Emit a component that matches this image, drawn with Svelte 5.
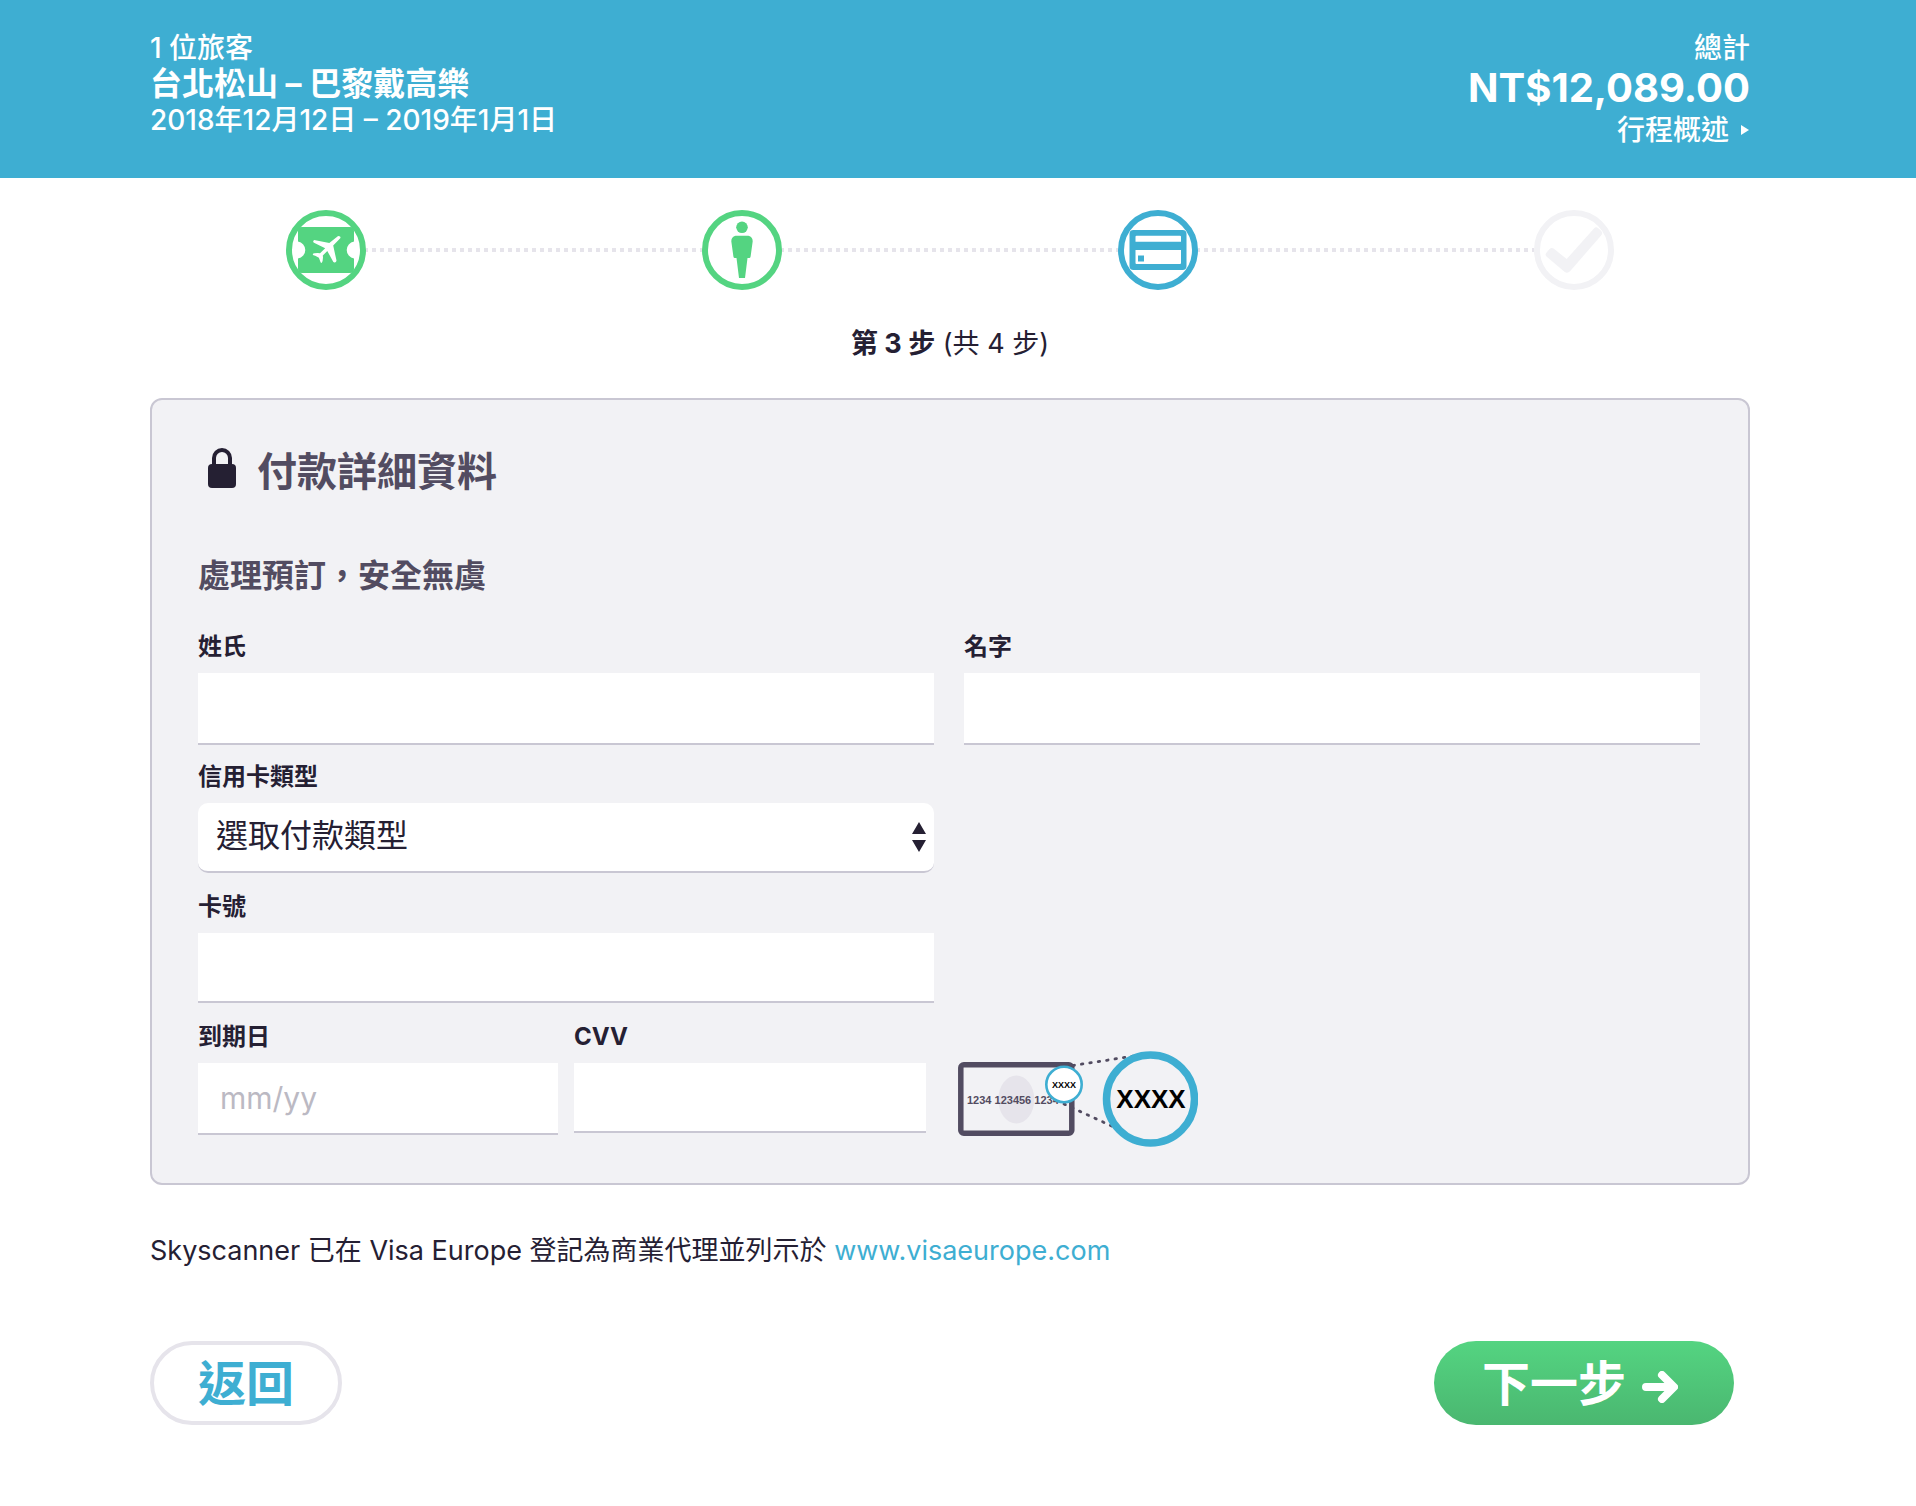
<script>
    // trip summary shown in the top bar
    const trip = {
        travellers: '1 位旅客',
        route: '台北松山 – 巴黎戴高樂',
        dates: '2018年12月12日 – 2019年1月1日',
        total: 'NT$12,089.00'
    }

    // checkout steps, in order
    const steps = [
        { icon: 'ticket', label: '航班', state: 'done' },
        { icon: 'person', label: '旅客', state: 'done' },
        { icon: 'card', label: '付款', state: 'current' },
        { icon: 'check', label: '完成', state: 'todo' }
    ]

    const cardTypes = ['Visa', 'Mastercard', 'American Express']

    let lastName = $state('')
    let firstName = $state('')
    let cardType = $state('')
    let cardNumber = $state('')
    let expiry = $state('')
    let cvv = $state('')

    function submit(event) {
        event.preventDefault()
    }
</script>

<div class="page" lang="zh-Hant">
    <header>
        <div class="trip">
            <p>{trip.travellers}</p>
            <p class="route">{trip.route}</p>
            <p>{trip.dates}</p>
        </div>
        <div class="total">
            <p>總計</p>
            <p class="price">{trip.total}</p>
            <a href="#summary">
                行程概述
                <svg width="9" height="12" viewBox="0 0 9 12" aria-hidden="true"><path d="M0 1v10l8-5z" /></svg>
            </a>
        </div>
    </header>

    <main>
        <ol class="steps">
            {#each steps as step, i}
                {#if i > 0}
                    <li class="line" aria-hidden="true"></li>
                {/if}
                <li class="step {step.state}">
                    <svg viewBox="0 0 80 80" role="img" aria-label={step.label}>
                        <circle class="ring" cx="40" cy="40" r="37" />
                        {#if step.icon === 'ticket'}
                            <path d="M16 17H64a4 4 0 0 1 4 4V31.500a8.600 8.600 0 0 0 0 17V59a4 4 0 0 1-4 4H16a4 4 0 0 1-4-4V48.500a8.600 8.600 0 0 0 0-17V21a4 4 0 0 1 4-4z" />
                            <path class="plane" d="M43.300 32.900L51.800 26.300Q53 25.600 54 26.600T54 28.600L47.200 35.500L50.500 50.600Q50.400 52 49 52.500Q47.800 52.700 47.200 51.700L41.300 41L36.800 45.400L37 47.600L36.600 51Q36 52.800 35.200 53Q34.400 52.600 34.200 51.300L32.900 47.700L29.200 45.700Q27 45.400 26.700 44.400Q27 43.300 28.500 43.300L31.700 42.900L34 43.200L39.200 38.200L28 32.700Q26.900 32 27.300 31Q28 29.800 29.300 30.200Z" />
                        {:else if step.icon === 'person'}
                            <circle cx="40" cy="17.300" r="5.800" />
                            <path d="M33.500 25.700h13q4.200 1 4.200 5.500L48.600 46.500q-.2 1.500-1.500 1.500h-1.600L43 68h-6L34.500 48h-1.600q-1.300 0-1.500-1.500L29.300 31.200q0-4.500 4.200-5.500z" />
                        {:else if step.icon === 'card'}
                            <path fill-rule="evenodd" d="M15.500 20h49a4 4 0 0 1 4 4v32a4 4 0 0 1-4 4h-49a4 4 0 0 1-4-4V24a4 4 0 0 1 4-4zM18.500 25.700a1 1 0 0 0-1 1v5h45.500v-5a1 1 0 0 0-1-1zM17.500 40v13a1 1 0 0 0 1 1h43.500a1 1 0 0 0 1-1v-13z" />
                            <path d="M20 45.500h6v6h-6z" />
                        {:else}
                            <path d="M60 18.500Q62 16.300 64.300 18.300L67 20.800Q69.200 23 67.300 25.200L36 61.300Q33.300 64 30.500 61.800L12.500 46.500Q10.700 44.600 12.400 42.700L15.300 39.300Q17.500 37 19.600 38.600L32.700 49Z" />
                        {/if}
                    </svg>
                </li>
            {/each}
        </ol>
        <p class="progress"><strong>第 3 步</strong> (共 4 步)</p>

        <form id="payment" onsubmit={submit}>
            <h1>
                <svg width="29" height="40" viewBox="0 0 29 40" aria-hidden="true">
                    <path class="shackle" d="M6 18V10a8 8 0 0 1 16 0V18" />
                    <rect y="16" width="28" height="24" rx="4" />
                </svg>
                付款詳細資料
            </h1>
            <h2>處理預訂，安全無虞</h2>

            <div class="row">
                <div class="field">
                    <label for="last-name">姓氏</label>
                    <input id="last-name" class="tall" type="text" bind:value={lastName} />
                </div>
                <div class="field">
                    <label for="first-name">名字</label>
                    <input id="first-name" class="tall" type="text" bind:value={firstName} />
                </div>
            </div>

            <div class="row">
                <div class="field">
                    <label for="card-type">信用卡類型</label>
                    <div class="select">
                        <select id="card-type" bind:value={cardType}>
                            <option value="">選取付款類型</option>
                            {#each cardTypes as type}
                                <option value={type}>{type}</option>
                            {/each}
                        </select>
                        <svg width="14" height="30" viewBox="0 0 14 30" aria-hidden="true">
                            <path d="M7 0l7 12H0zM7 30l7-12H0z" />
                        </svg>
                    </div>
                </div>
            </div>

            <div class="row">
                <div class="field">
                    <label for="card-number">卡號</label>
                    <input id="card-number" type="text" inputmode="numeric" bind:value={cardNumber} />
                </div>
            </div>

            <div class="row security">
                <div class="field">
                    <label for="expiry">到期日</label>
                    <input id="expiry" class="tall" type="text" placeholder="mm/yy" bind:value={expiry} />
                </div>
                <div class="field">
                    <label for="cvv">CVV</label>
                    <input id="cvv" type="text" inputmode="numeric" bind:value={cvv} />
                </div>
                <!-- where to find the code on the card -->
                <svg class="hint" width="240" height="96" viewBox="0 0 240 96">
                    <rect class="card" x="2.800" y="13.800" width="111" height="68.500" rx="3" />
                    <ellipse cx="58.300" cy="48.500" rx="18" ry="24" />
                    <text class="digits" x="9" y="53">1234 123456 1234</text>
                    <path class="dots" d="M115 14.500L176 5M106 53L158 77" />
                    <circle class="small" cx="106" cy="33.500" r="17.700" />
                    <text class="small-code" x="106" y="37">XXXX</text>
                    <circle class="big" cx="192.500" cy="48" r="44" />
                    <text class="big-code" x="193" y="57">XXXX</text>
                </svg>
            </div>
        </form>

        <p class="note">Skyscanner 已在 Visa Europe 登記為商業代理並列示於 <a href="http://www.visaeurope.com">www.visaeurope.com</a></p>

        <div class="actions">
            <button class="back" type="button">返回</button>
            <button class="next" type="submit" form="payment">
                下一步
                <svg width="36" height="32" viewBox="0 0 36 32" aria-hidden="true">
                    <path d="M4 16H30M20 4L32 16L20 28" />
                </svg>
            </button>
        </div>
    </main>
</div>

<style>
:global(body) {
    margin: 0;
    background-color: #fff;
}

.page {
    font-family: Inter, "Noto Sans CJK TC", sans-serif;
    font-size: 28px;
    line-height: 36px;
    color: #252033;
}

p, h1, h2 {
    margin: 0;
}

/* top bar */
header {
    display: flex;
    justify-content: space-between;
    padding: 30px 166px 28px 150px;
    background-color: #3eaed2;
    color: #fff;
    font-weight: 500;
}

header .route {
    font-size: 32px;
    font-weight: 700;
}

.total {
    text-align: right;
}

.total .price {
    font-size: 40px;
    font-weight: 700;
    line-height: 44px;
}

.total a {
    display: flex;
    justify-content: flex-end;
    align-items: center;
    gap: 12px;
    line-height: 40px;
    color: #fff;
    text-decoration: none;
}

.total svg {
    fill: #fff;
}

main {
    padding: 32px 166px 72px 150px;
}

/* step indicator */
.steps {
    display: flex;
    align-items: center;
    margin: 0;
    padding: 0 136px;
    list-style: none;
}

.step {
    width: 80px;
    height: 80px;
}

.step svg {
    display: block;
    fill: currentColor;
}

.step .ring {
    fill: none;
    stroke: currentColor;
    stroke-width: 6;
}

.step .plane {
    fill: #fff;
}

.done {
    color: #54d481;
}

.current {
    color: #3eaed2;
}

.todo {
    color: #f2f2f5;
}

.line {
    flex: 1;
    height: 4px;
    background: repeating-linear-gradient(to right, #e6e4eb 0 2px, transparent 2px 6px, #e6e4eb 6px 8px);
}

.progress, .note {
    font-size: 27px;
}

.progress {
    margin: 36px 0;
    text-align: center;
}

/* payment form */
form {
    padding: 48px 48px 32px 46px;
    border: 2px solid #c9c7d3;
    border-radius: 12px;
    background-color: #f2f2f5;
}

h1 {
    display: flex;
    gap: 20px;
    padding-left: 10px;
    font-size: 40px;
    line-height: 48px;
    color: #524c61;
}

h1 svg {
    fill: #252033;
}

h1 .shackle {
    fill: none;
    stroke: #252033;
    stroke-width: 4;
}

h2 {
    margin: 60px 0 35px;
    font-size: 32px;
    line-height: 40px;
    color: #524c61;
}

.row {
    display: grid;
    grid-template-columns: 1fr 1fr;
    column-gap: 30px;
    min-height: 130px;
}

.security {
    grid-template-columns: 360fr 352fr 758fr;
    column-gap: 16px;
}

label {
    display: block;
    margin-bottom: 10px;
    font-size: 24px;
    font-weight: 700;
    line-height: 32px;
}

input, select {
    display: block;
    box-sizing: border-box;
    width: 100%;
    height: 70px;
    padding: 0 22px;
    border: none;
    border-bottom: 2px solid #c9c7d3;
    border-radius: 0;
    background-color: #fff;
    font-family: inherit;
    font-size: 30px;
    color: #252033;
}

input.tall {
    height: 72px;
}

input::placeholder {
    color: #bbb9c3;
}

.select {
    position: relative;
}

select {
    padding: 0 40px 4px 18px;
    border-radius: 10px;
    font-size: 32px;
    appearance: none;
}

.select svg {
    position: absolute;
    top: 19px;
    right: 8px;
    fill: #252033;
    pointer-events: none;
}

/* card picture next to the cvv field */
.hint {
    margin: 30px 0 0 16px;
    font-family: "Liberation Sans", Arial, sans-serif;
    font-weight: 700;
}

.hint .card {
    fill: none;
    stroke: #524c61;
    stroke-width: 5.5;
}

.hint ellipse {
    fill: #e6e4eb;
}

.hint .digits {
    font-size: 11px;
    fill: #524c61;
}

.hint .dots {
    fill: none;
    stroke: #524c61;
    stroke-width: 2.8;
    stroke-linecap: round;
    stroke-dasharray: 1.5 7;
}

.hint .small {
    fill: #fff;
    stroke: #3eaed2;
    stroke-width: 2.6;
}

.hint .big {
    fill: #f2f2f5;
    stroke: #3eaed2;
    stroke-width: 7.5;
}

.hint .small-code, .hint .big-code {
    text-anchor: middle;
    fill: #000;
}

.hint .small-code {
    font-size: 9px;
}

.hint .big-code {
    font-size: 26px;
}

/* below the form */
.note {
    margin: 48px 0 72px;
}

.note a {
    color: #3eaed2;
    text-decoration: none;
}

.actions {
    display: flex;
    justify-content: space-between;
    padding-right: 16px;
}

button {
    display: flex;
    align-items: center;
    height: 84px;
    padding: 2px 48px 0;
    border: none;
    border-radius: 42px;
    font-family: inherit;
    font-size: 48px;
    font-weight: 700;
    line-height: 56px;
    cursor: pointer;
}

.back {
    padding: 2px 44px 0;
    border: 4px solid #e6e4eb;
    background: #fff;
    color: #3eaed2;
}

.next {
    gap: 16px;
    padding-right: 56px;
    background: linear-gradient(#54d481, #4ab770);
    color: #fff;
}

.next svg {
    margin-top: 6px;
    fill: none;
    stroke: #fff;
    stroke-width: 8;
    stroke-linecap: round;
    stroke-linejoin: round;
}
</style>
